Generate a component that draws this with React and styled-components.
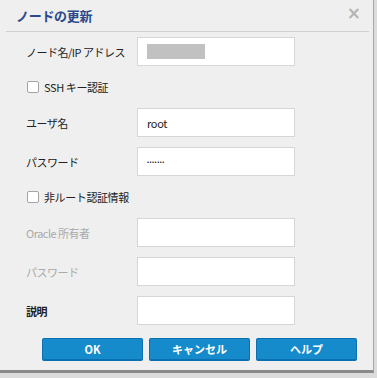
import React from "react";
import styled, { createGlobalStyle } from "styled-components";

const GlobalStyle = createGlobalStyle`
  html, body {
    margin: 0;
    padding: 0;
    background: #dcdcdc;
  }
  body {
    font-family: "Noto Sans CJK JP", "Liberation Sans", sans-serif;
  }
`;

const fields = [
  { type: "field", label: "ノード名/IP アドレス", masked: true },
  { type: "check", label: "SSH キー認証" },
  { type: "field", label: "ユーザ名", value: "root" },
  { type: "field", label: "パスワード", value: "•••••••", dots: true },
  { type: "check", label: "非ルート認証情報" },
  { type: "field", label: "Oracle 所有者", disabled: true },
  { type: "field", label: "パスワード", disabled: true },
  { type: "field", label: "説明", strong: true },
];

const App = () => {
  return (
    <>
      <GlobalStyle />
      <Dialog>
        <Header>
          <Title>ノードの更新</Title>
          <Close>×</Close>
        </Header>
        <Divider />
        <Body>
          {fields.map((f, i) =>
            f.type === "check" ? (
              <CheckRow key={i}>
                <Box />
                <CheckLabel>{f.label}</CheckLabel>
              </CheckRow>
            ) : (
              <FieldRow key={i}>
                <Label $disabled={f.disabled} $strong={f.strong}>
                  {f.label}
                </Label>
                <Input $dots={f.dots}>
                  {f.masked && <Masked />}
                  {f.value}
                </Input>
              </FieldRow>
            )
          )}
        </Body>
        <Buttons>
          <Button>OK</Button>
          <Button>キャンセル</Button>
          <Button>ヘルプ</Button>
        </Buttons>
      </Dialog>
    </>
  );
};

export default App;

const Dialog = styled.div`
  width: 374px;
  height: 373px;
  background: #efefef;
  border-right: 1px solid #a8a8a8;
  border-bottom: 3px solid #8a8a8a;
  box-sizing: border-box;
  display: flex;
  flex-direction: column;
`;

const Header = styled.div`
  height: 31px;
  display: flex;
  align-items: center;
  justify-content: space-between;
  padding: 0 12px 0 16px;
`;

const Title = styled.div`
  font-size: 13px;
  font-weight: bold;
  color: #2b4a8c;
  letter-spacing: -0.3px;
`;

const Close = styled.div`
  font-family: "DejaVu Sans", sans-serif;
  font-size: 17px;
  font-weight: bold;
  color: #b4b4b4;
  line-height: 1;
  margin-top: -4px;
`;

const Divider = styled.div`
  height: 1px;
  margin: 0 4px 0 6px;
  background: #cfcfcf;
`;

const Body = styled.div`
  padding: 5px 0 0 26px;
  display: flex;
  flex-direction: column;
  gap: 10px;
`;

const FieldRow = styled.div`
  display: grid;
  grid-template-columns: 111px 158px;
  align-items: center;
  height: 29px;
`;

const Label = styled.div`
  font-size: 11px;
  letter-spacing: -0.5px;
  color: ${(p) => (p.$disabled ? "#a9a9a9" : "#222")};
  font-weight: ${(p) => (p.$strong ? "bold" : "normal")};
`;

const Input = styled.div`
  height: 29px;
  box-sizing: border-box;
  background: #fff;
  border: 1px solid #d6d6d6;
  display: flex;
  align-items: center;
  padding-left: 9px;
  font-size: ${(p) => (p.$dots ? "6px" : "11px")};
  letter-spacing: ${(p) => (p.$dots ? "0.5px" : "-0.3px")};
  color: #222;
`;

const Masked = styled.div`
  width: 58px;
  height: 15px;
  background: #c1c1c1;
`;

const CheckRow = styled.div`
  height: 22px;
  display: flex;
  align-items: center;
  gap: 5px;
  padding-left: 1px;
`;

const Box = styled.div`
  width: 10px;
  height: 10px;
  border: 1px solid #a4a4a4;
  border-radius: 2px;
  background: #fff;
`;

const CheckLabel = styled.div`
  font-size: 11px;
  letter-spacing: -0.4px;
  color: #222;
`;

const Buttons = styled.div`
  display: flex;
  justify-content: flex-end;
  gap: 6px;
  padding: 13px 16px 0 0;
`;

const Button = styled.div`
  width: 101px;
  height: 23px;
  box-sizing: border-box;
  background: #158bcb;
  border: 1px solid #0a70b2;
  border-bottom-width: 2px;
  border-radius: 2px;
  color: #fff;
  font-size: 11px;
  font-weight: bold;
  display: flex;
  align-items: center;
  justify-content: center;
`;
